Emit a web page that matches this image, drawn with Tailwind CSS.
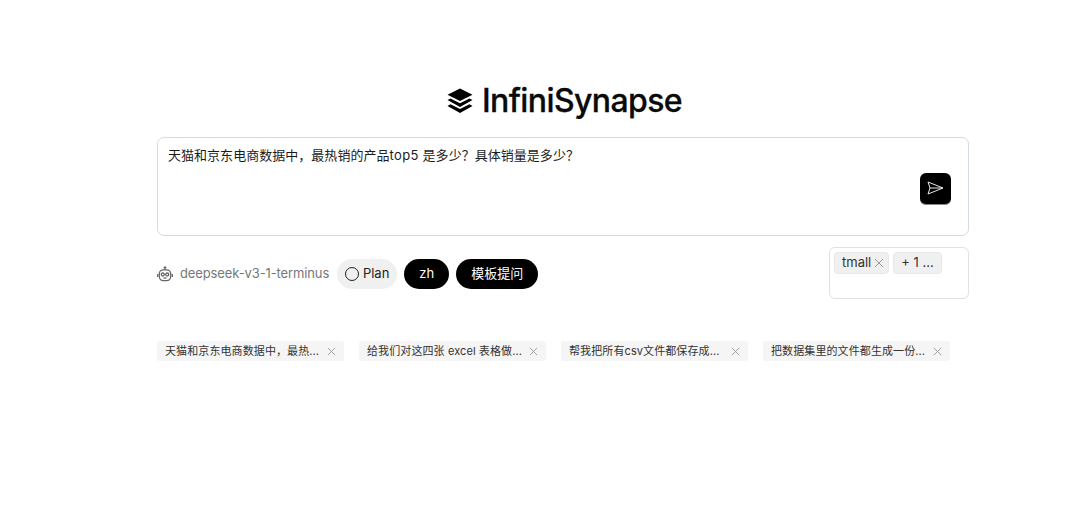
<!DOCTYPE html>
<html lang="en">
<head>
    <meta charset="UTF-8">
    <title>InfiniSynapse</title>
    <script src="https://cdn.jsdelivr.net/npm/@tailwindcss/browser@4"></script>
</head>
<body class="bg-white text-[#111] font-['Inter','Noto_Sans_CJK_SC',sans-serif] w-[1080px] h-[505px] overflow-hidden">
    <div class="w-[812px] ml-[157px] pt-[81px]">

        <!-- Logo -->
        <div class="flex items-center justify-center h-[40px] gap-[9px] pl-[3px]">
            <svg class="w-[26px] h-[26px]" viewBox="0 0 26 26" fill="#000">
                <path d="M13 0.500 25.500 6.800 13 13 0.500 6.800Z"/>
                <path d="M3.500 10.500 13 15.300l9.500-4.800 3 1.600L13 19 0.500 12.100Z"/>
                <path d="M3.500 16.300 13 21.100l9.500-4.800 3 1.600L13 25 0.500 17.900Z"/>
            </svg>
            <span class="text-[32px] leading-[40px] font-medium tracking-[-0.6px] text-[#0a0a0a] [-webkit-text-stroke:0.3px_#0a0a0a]">InfiniSynapse</span>
        </div>

        <!-- Question box -->
        <div class="relative mt-[16px] h-[99px] border border-[#d5dbe3] rounded-[7px] px-[10px] py-[7px]">
            <p class="text-[13px] leading-[20px] tracking-[0.03px] text-[#1c1c1c]">天猫和京东电商数据中，最热销的产品<span class="tracking-[0.4px]">top5</span> 是多少？具体销量是多少？</p>
            <button class="absolute right-[17px] top-[35px] w-[31px] h-[32px] bg-black rounded-[6px] border-b border-[#888] flex items-center justify-center">
                <svg class="w-[17px] h-[14px] -translate-y-[1px]" viewBox="0 0 17 14" fill="none" stroke="#e8e8e8" stroke-width="1" stroke-linejoin="round">
                    <path d="M1 1 16 7 1 13 3 7Z"/>
                    <path d="M3 7h13"/>
                </svg>
            </button>
        </div>

        <!-- Options -->
        <div class="flex items-center justify-between mt-[11px]">
            <div class="flex items-center pt-[2px]">
                <svg class="w-[16px] h-[16px] text-[#666]" viewBox="0 0 16 16" fill="none" stroke="currentColor" stroke-width="1.3">
                    <rect x="6.500" y="0.500" width="3" height="2" rx="1" fill="currentColor" stroke="none"/>
                    <path d="M8 2v1.500"/>
                    <rect x="2.300" y="3.800" width="11.400" height="10.800" rx="4"/>
                    <path d="M0.700 8v3M15.300 8v3"/>
                    <circle cx="5.800" cy="8.500" r="1.500"/>
                    <circle cx="10.200" cy="8.500" r="1.500"/>
                    <path d="M6.500 12h3"/>
                </svg>
                <span class="ml-[7px] text-[13px] tracking-[-0.12px] text-[#777]">deepseek-v3-1-terminus</span>
                <div class="ml-[8px] h-[30px] w-[60px] rounded-full bg-[#f0f0f0] flex items-center justify-center gap-[4px] text-[13px] text-[#222]">
                    <span class="w-[14px] h-[14px] rounded-full border border-[#222]"></span>
                    <span>Plan</span>
                </div>
                <div class="ml-[7px] h-[30px] w-[45px] rounded-full bg-black text-white text-[13px] flex items-center justify-center">zh</div>
                <div class="ml-[7px] h-[30px] w-[82px] rounded-full bg-black text-white text-[13px] flex items-center justify-center">模板提问</div>
            </div>
            <div class="w-[140px] h-[52px] border border-[#e2e2e2] rounded-[6px] px-[4px] py-[4px] flex items-start gap-[4px]">
                <span class="h-[22px] w-[55px] bg-[#f0f0f0] border border-[#e8e8e8] rounded-[4px] flex items-center pl-[7px] gap-[3px] text-[13px] text-[#333]">
                    tmall
                    <svg class="w-[10px] h-[10px]" viewBox="0 0 10 10" stroke="#999" stroke-width="1"><path d="M1 1l8 8M9 1l-8 8"/></svg>
                </span>
                <span class="h-[22px] w-[49px] bg-[#f0f0f0] border border-[#e8e8e8] rounded-[4px] flex items-center justify-center text-[13px] text-[#333]">+ 1 ...</span>
            </div>
        </div>

        <!-- History -->
        <div class="flex gap-[15px] mt-[42px]">
            <div class="w-[187px] h-[20px] bg-[#f5f5f5] rounded-[3px] pl-[8px] pr-[8px] flex items-center justify-between text-[11px] tracking-[0.1px] text-[#333]">
                <span>天猫和京东电商数据中，最热...</span>
                <svg class="w-[9px] h-[9px]" viewBox="0 0 10 10" stroke="#999" stroke-width="1"><path d="M1 1l8 8M9 1l-8 8"/></svg>
            </div>
            <div class="w-[187px] h-[20px] bg-[#f5f5f5] rounded-[3px] pl-[8px] pr-[8px] flex items-center justify-between text-[11px] tracking-[0.1px] text-[#333]">
                <span>给我们对这四张 excel 表格做...</span>
                <svg class="w-[9px] h-[9px]" viewBox="0 0 10 10" stroke="#999" stroke-width="1"><path d="M1 1l8 8M9 1l-8 8"/></svg>
            </div>
            <div class="w-[187px] h-[20px] bg-[#f5f5f5] rounded-[3px] pl-[8px] pr-[8px] flex items-center justify-between text-[11px] tracking-[0.1px] text-[#333]">
                <span>帮我把所有csv文件都保存成...</span>
                <svg class="w-[9px] h-[9px]" viewBox="0 0 10 10" stroke="#999" stroke-width="1"><path d="M1 1l8 8M9 1l-8 8"/></svg>
            </div>
            <div class="w-[187px] h-[20px] bg-[#f5f5f5] rounded-[3px] pl-[8px] pr-[8px] flex items-center justify-between text-[11px] tracking-[0.1px] text-[#333]">
                <span>把数据集里的文件都生成一份...</span>
                <svg class="w-[9px] h-[9px]" viewBox="0 0 10 10" stroke="#999" stroke-width="1"><path d="M1 1l8 8M9 1l-8 8"/></svg>
            </div>
        </div>
    </div>
</body>
</html>
